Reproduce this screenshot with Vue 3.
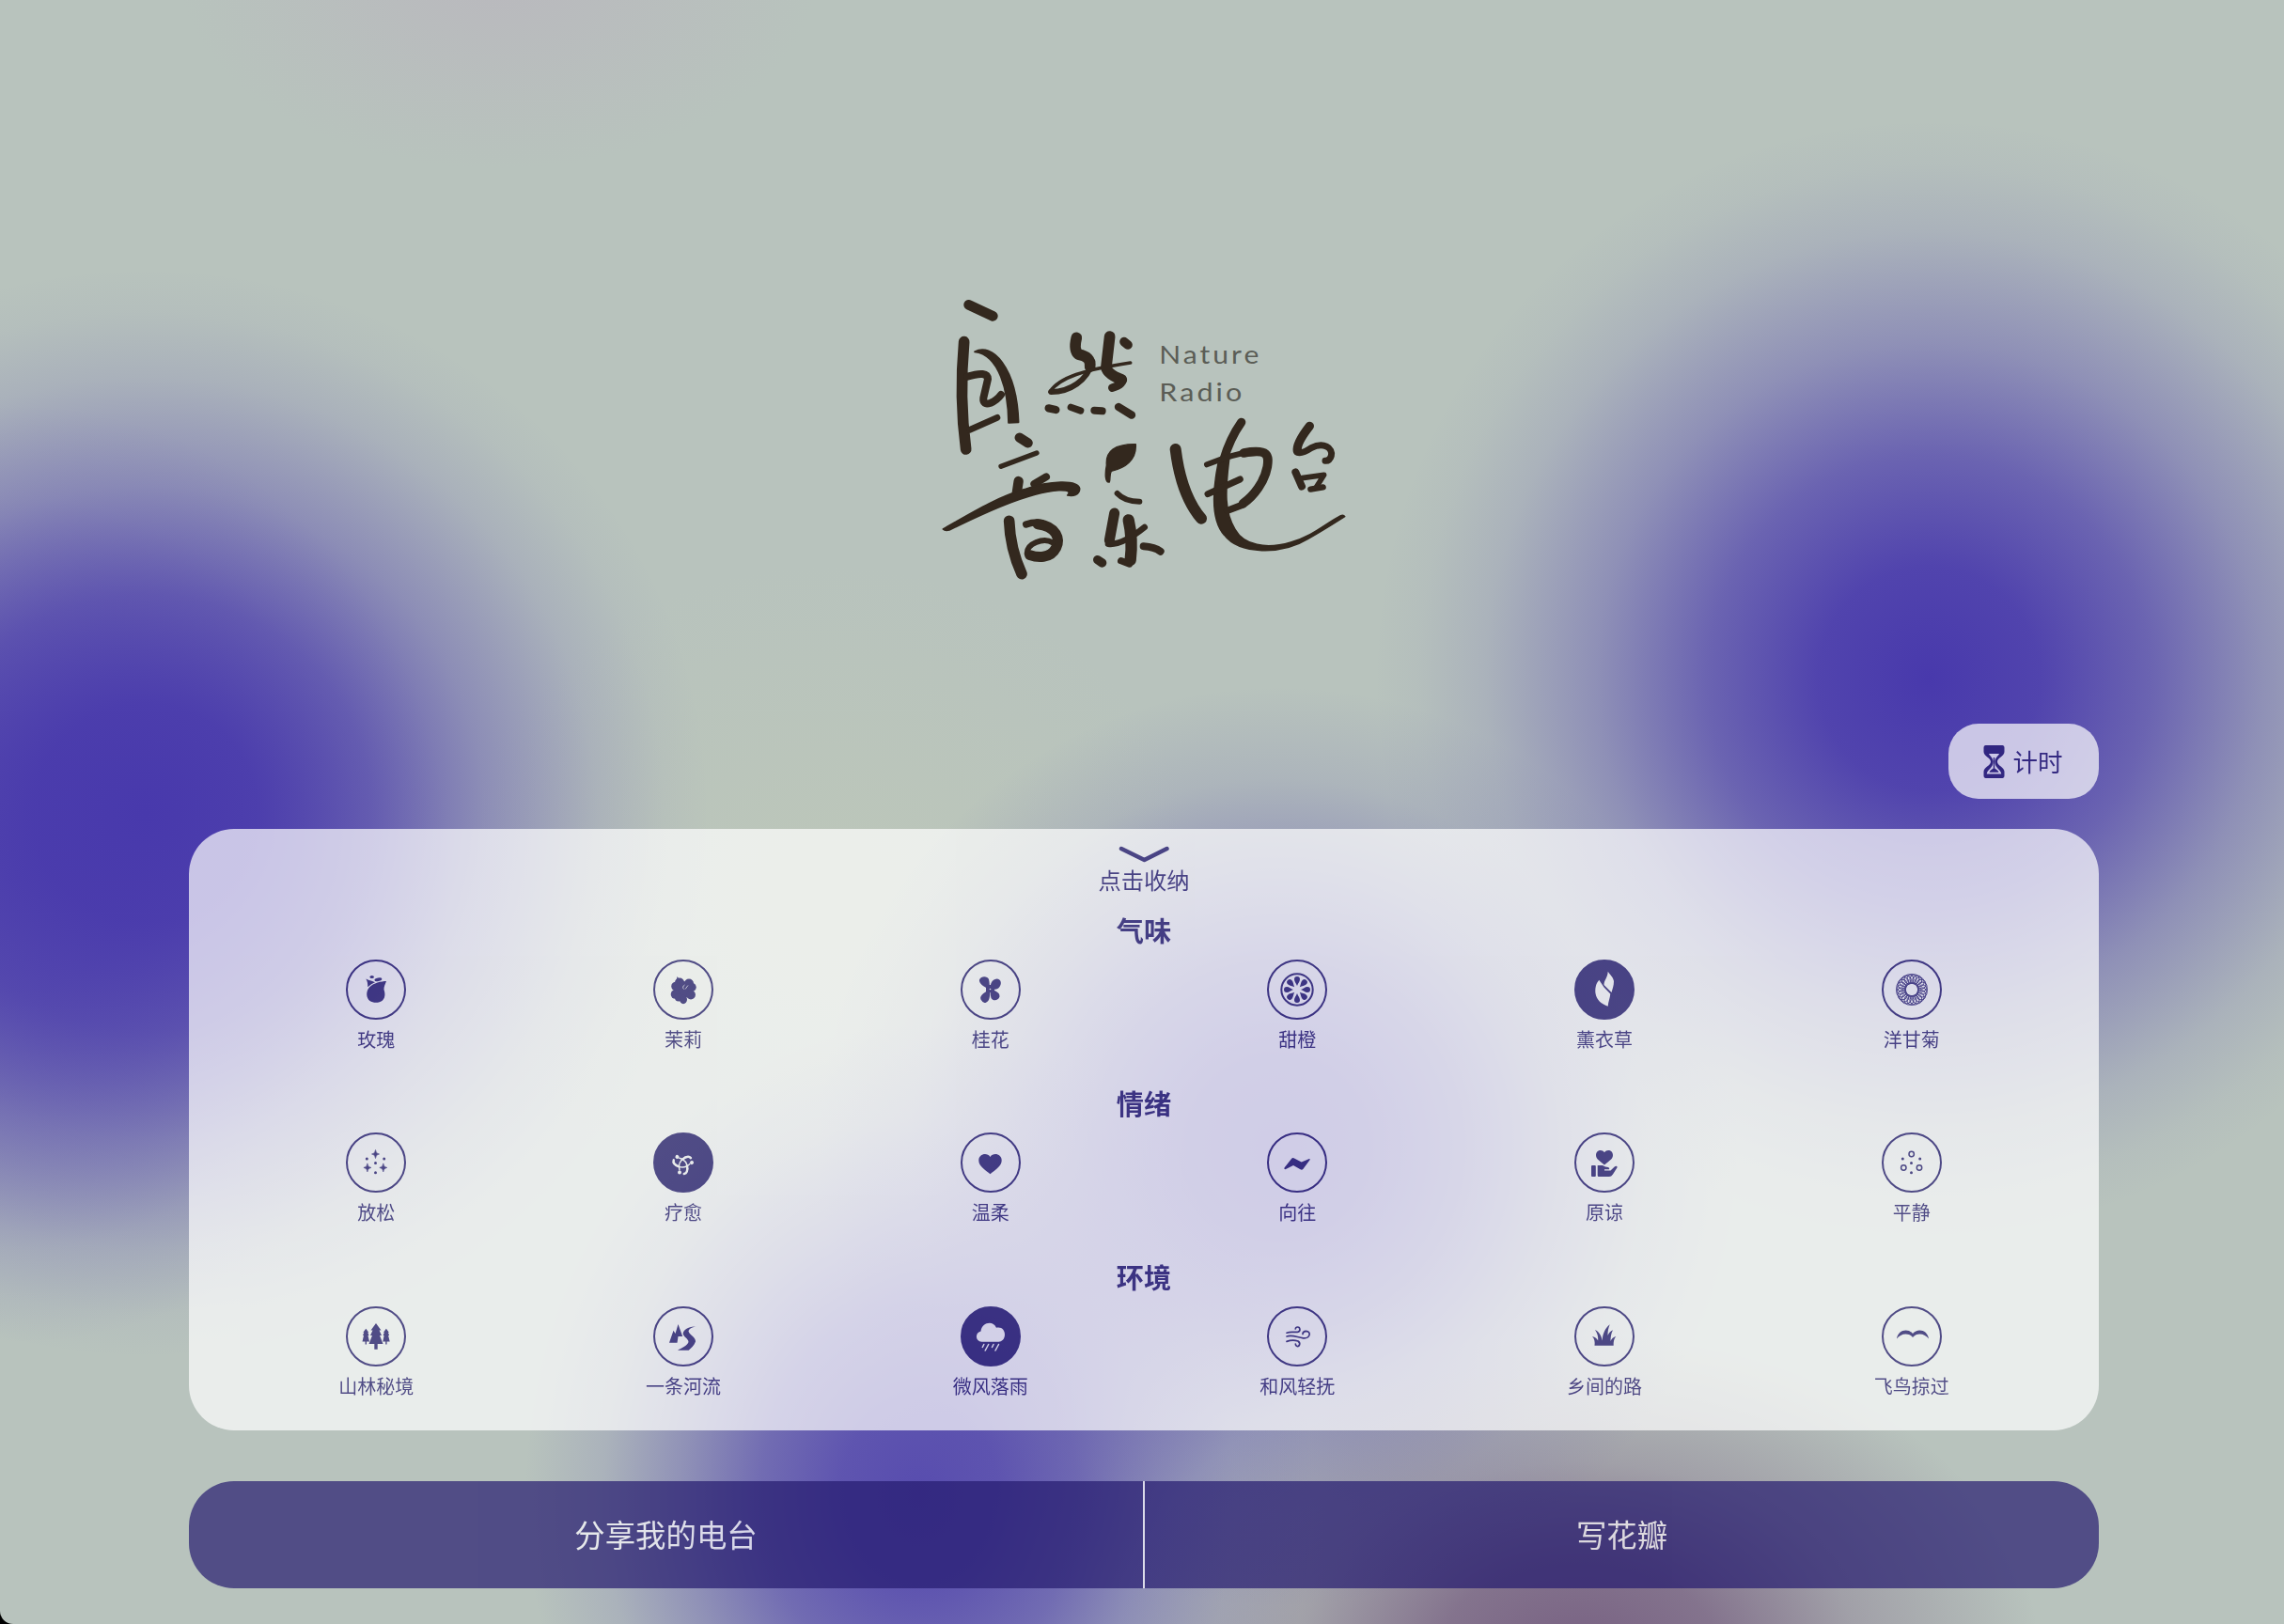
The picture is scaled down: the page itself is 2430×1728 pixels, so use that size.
<script setup>
const sections = [
  {
    title: '气味',
    items: [
      { label: '玫瑰', icon: 'rose' },
      { label: '茉莉', icon: 'jasmine' },
      { label: '桂花', icon: 'osmanthus' },
      { label: '甜橙', icon: 'orange' },
      { label: '薰衣草', icon: 'lavender', active: true },
      { label: '洋甘菊', icon: 'chamomile' },
    ],
  },
  {
    title: '情绪',
    items: [
      { label: '放松', icon: 'relax' },
      { label: '疗愈', icon: 'heal', active: true },
      { label: '温柔', icon: 'heart' },
      { label: '向往', icon: 'yearn' },
      { label: '原谅', icon: 'forgive' },
      { label: '平静', icon: 'calm' },
    ],
  },
  {
    title: '环境',
    items: [
      { label: '山林秘境', icon: 'forest' },
      { label: '一条河流', icon: 'river' },
      { label: '微风落雨', icon: 'rain', active: true },
      { label: '和风轻抚', icon: 'wind' },
      { label: '乡间的路', icon: 'grass' },
      { label: '飞鸟掠过', icon: 'bird' },
    ],
  },
]
const eighths = [0, 45, 90, 135, 180, 225, 270, 315]
const thirds = [0, 120, 240]
const petals = Array.from({ length: 24 }, (_, i) => i * 15)
</script>

<template>
  <main class="page">
    <header class="hero">
      <svg class="logo" viewBox="0 0 1440 1050" fill="none" stroke="#33281e" stroke-linecap="round" stroke-linejoin="round">
        <g class="brush">
          <path stroke-width="32" d="M152 103 229 139" />
          <path stroke-width="35" d="M137 221Q121 400 143 564" />
          <path fill="#33281e" stroke-width="5" d="M171 253C225 222 305 300 311 478L279 480C278 380 250 262 171 253Z" />
          <path stroke-width="24" d="M148 332Q212 312 213 340L199 400Q196 425 222 416Q242 408 255 390" />
          <path stroke-width="20" d="M155 502 243 463" />

          <path stroke-width="35" d="M496 208Q486 248 503 262Q543 268 539 300" />
          <path stroke-width="18" d="M547 285C530 345 475 381 415 381" />
          <path stroke-width="11" d="M411 381C440 335 520 310 668 288" />
          <path stroke-width="35" d="M602 204 591 300Q590 322 640 342" />
          <path stroke-width="26" d="M642 340Q645 358 610 368" />
          <path stroke-width="29" d="M648 221 660 231" />
          <path stroke-width="25" d="M407 433 430 438" />
          <path stroke-width="22" d="M478 430 509 441" />
          <path stroke-width="24" d="M553 440 578 442" />
          <path stroke-width="25" d="M630 429 672 455" />

          <path stroke-width="31" d="M314 527 341 544" />
          <path stroke-width="16" d="M255 619 369 576" />
          <path stroke-width="31" d="M311 666 305 706" />
          <path stroke-width="24" d="M361 675 399 652" />
          <path fill="#33281e" stroke-width="5" d="M70 819C160 768 240 718 330 692C410 664 500 660 506 690C506 710 485 715 467 711C477 700 472 694 440 695C340 702 200 768 90 822Q76 825 70 819Z" />
          <path stroke-width="35" d="M281 793Q284 880 321 962" />
          <path stroke-width="22" d="M335 804Q360 795 385 799" />
          <path stroke-width="33" d="M372 803C434 810 444 852 431 878C412 915 370 910 347 902" />
          <path stroke-width="18" d="M338 897C337 865 390 845 420 862" />

          <path fill="#33281e" stroke-width="4" d="M685 548C688 600 650 625 607 634C600 645 605 660 601 669C586 672 587 640 592 615C588 570 618 547 685 548Z" />
          <path stroke-width="18" d="M626 705Q650 731 697 731" />
          <path stroke-width="33" d="M617 768 601 855" />
          <path stroke-width="20" d="M597 866Q640 872 713 813" />
          <path stroke-width="37" d="M662 790Q676 850 668 918" />
          <path stroke-width="22" d="M665 930 638 920" />
          <path stroke-width="28" d="M563 917 578 927" />
          <path stroke-width="24" d="M710 874Q745 876 764 890" />

          <path stroke-width="36" d="M812 564Q830 710 894 785" />
          <path stroke-width="28" d="M1022 478Q985 530 965 600" />
          <path fill="#33281e" stroke-width="5" d="M948 610C930 700 925 790 968 838C1015 900 1150 902 1235 850C1280 825 1315 802 1352 779Q1348 773 1338 777C1290 802 1250 842 1180 861C1100 885 1030 870 1002 820C968 765 970 700 983 595Z" />
          <path stroke-width="18" d="M912 613C960 594 1010 577 1060 571" />
          <path stroke-width="29" d="M1030 576C1110 561 1110 585 1105 620C1096 668 1063 712 1028 737" />
          <path stroke-width="22" d="M1027 741 977 760" />
          <path stroke-width="21" d="M915 707 1018 660" />

          <path stroke-width="28" d="M1240 490Q1197 545 1201 569" />
          <path stroke-width="21" d="M1201 574Q1215 580 1245 560C1285 540 1315 560 1309 585Q1304 602 1290 601" />
          <path stroke-width="24" d="M1195 637 1215 683" />
          <path stroke-width="17" d="M1216 656 1286 646 1262 684" />
          <path stroke-width="19" d="M1243 692 1283 685" />
        </g>
        <g class="wordmark" stroke="none">
          <text x="760" y="291" textLength="327" lengthAdjust="spacingAndGlyphs">Nature</text>
          <text x="760" y="411" textLength="273" lengthAdjust="spacingAndGlyphs">Radio</text>
        </g>
      </svg>
    </header>

    <div class="tools">
      <button class="timer">
        <svg class="hourglass" viewBox="0 0 23 35">
          <path fill="currentColor" d="M2.500 0h18a2.300 2.300 0 0 1 2 2.500V7c0 4.500-7.500 6.500-7.500 10.500s7.500 6 7.500 10.500v4.500a2.300 2.300 0 0 1-2 2.500h-18a2.300 2.300 0 0 1-2-2.500V28c0-4.500 7.500-6.500 7.500-10.500S.5 11.500.5 7V2.500A2.300 2.300 0 0 1 2.500 0Z" />
          <path fill="#fff" d="M6 9h11c-1 2.500-4.200 4-4.700 8.300.3 7.200 6.200 8.200 7 13.200H3.700c.8-5 6.700-6 7-13.200C10.200 13 7 11.500 6 9Z" />
          <path fill="currentColor" d="M10.800 13h1.400v11.500c2 1.500 3.800 2.300 4.300 4.200h-10c.5-1.900 2.300-2.700 4.300-4.200Z" />
        </svg>
        <span>计时</span>
      </button>
    </div>

    <section class="panel">
      <button class="collapse">
        <svg class="chevron" viewBox="0 0 54 18" fill="none" stroke="currentColor" stroke-width="4.500" stroke-linecap="round" stroke-linejoin="round"><path d="M3 3 27.500 15 51.500 3" /></svg>
        <span>点击收纳</span>
      </button>

      <div v-for="section in sections" :key="section.title" class="section">
        <h2>{{ section.title }}</h2>
        <ul class="options">
          <li v-for="item in section.items" :key="item.label" class="option" :class="{ active: item.active }">
            <svg class="badge" viewBox="0 0 64 64" fill="currentColor">
              <circle class="disc" cx="32" cy="32" r="31" />
              <g v-if="item.icon === 'rose'">
                <path d="M43 23C38 23 29 25 25 29.500C21 34 21.500 41 25.500 44C29 46.500 35.500 46.500 39 43.500C42.500 40 41.500 35 40.500 32C40.200 29 42 26 43 23Z" />
                <path d="M21.300 20.500C24 22.500 27 22 31 24.300C28 25.500 26 27 23.300 29.300C23.300 26 23 23 21.300 20.500Z" />
                <ellipse cx="27.700" cy="18.500" rx="2.200" ry="1.600" />
                <ellipse cx="34.400" cy="21.300" rx="4" ry="1.800" transform="rotate(-10 34.400 21.300)" />
              </g>
              <g v-else-if="item.icon === 'jasmine'">
                <circle cx="32" cy="32" r="9" /><circle cx="28" cy="24.500" r="5" /><circle cx="38" cy="25.500" r="5" />
                <circle cx="24" cy="28.500" r="4.800" /><circle cx="41" cy="29.500" r="4.700" /><circle cx="23.500" cy="37" r="4.800" />
                <circle cx="40" cy="37.500" r="4.900" /><circle cx="27" cy="40.500" r="4" /><ellipse cx="32" cy="42.500" rx="4" ry="4.700" />
                <path d="m25.500 18 3 4-4 1Z" />
                <path class="cut" d="M32.500 31.500c-1.500-1.500-1-3.500 1-4.500M34 31.500l3-4" />
              </g>
              <g v-else-if="item.icon === 'osmanthus'">
                <path d="M31.500 31.500C25 30 19 25 20 21.500C22 17 28.500 17.500 30 21C31 25 30.500 28 31.500 31.500Z" />
                <path d="M31.500 31.500C31.500 26 33 21 38.500 20.500C43 21 44 25 41.500 29C39 32.500 35 32 31.500 31.500Z" />
                <path d="M31.500 31.500C36 33 42 34.500 41.500 39.500C40 44 34.500 44.500 32.500 41C31.500 38 32 35 31.500 31.500Z" />
                <path d="M31.500 31.500C31 37 32 44 26.500 46C23.500 46 22.500 43.500 21.500 42.500C19.500 38 27 34 31.500 31.500Z" />
                <path d="M27 27h9v8h-9Z" /><circle class="cut-dot" cx="31.500" cy="31.500" r=".8" />
              </g>
              <g v-else-if="item.icon === 'orange'">
                <circle class="line" cx="32" cy="32" r="16.700" stroke-width="2" />
                <path v-for="angle in eighths" :key="angle" d="M32 28C31.200 25.500 29 23.500 29 21A3 3 0 0 1 35 21C35 23.500 32.800 25.500 32 28Z" :transform="`rotate(${angle} 32 32)`" />
              </g>
              <g v-else-if="item.icon === 'lavender'">
                <path d="M26.300 21.700C22.500 26 22 31 22.500 36C23.500 43 29 47.500 35.700 49.700C36 45 38 41 38.300 36.500L31.500 29.500Z" />
                <path d="M35.700 12.700C38 16.500 41 18 42 23C42 28 40.500 31 39.500 35L31.500 27C31.500 22 35.500 19 35.700 12.700Z" />
              </g>
              <g v-else-if="item.icon === 'chamomile'">
                <circle v-for="angle in petals" :key="angle" class="line" cx="32" cy="20.500" r="5" stroke-width=".9" :transform="`rotate(${angle} 32 32)`" />
              </g>
              <g v-else-if="item.icon === 'relax' || item.icon === 'calm'">
                <circle cx="22.300" cy="28" r="1.500" /><circle cx="40.700" cy="28" r="1.500" />
                <circle cx="31.500" cy="32.500" r="1.500" /><circle cx="31.500" cy="42.800" r="1.500" />
                <template v-if="item.icon === 'relax'">
                  <path id="spark" d="M31.500 18.500Q31.800 22.700 35.500 23Q31.800 23.300 31.500 27.500Q31.200 23.300 27.500 23Q31.200 22.700 31.500 18.500Z" stroke="currentColor" stroke-width=".6" />
                  <use href="#spark" x="-8.600" y="14.400" /><use href="#spark" x="8.300" y="14.400" />
                </template>
                <g v-else class="line" stroke-width="1.500">
                  <circle cx="31.700" cy="23" r="2.700" /><circle cx="23.300" cy="37.500" r="2.700" /><circle cx="40" cy="37.500" r="2.700" />
                </g>
              </g>
              <g v-else-if="item.icon === 'heal'">
                <g v-for="angle in thirds" :key="angle" :transform="`rotate(${angle} 31.500 33.500)`">
                  <path class="line" stroke-width="1.500" d="M28 40.500C25.500 33 29.500 29 34 26" />
                  <path class="line" stroke-width="2.500" stroke-linecap="round" d="M36 35.500C36.800 40.500 35.500 43.500 32.800 44" />
                  <circle cx="28" cy="42.500" r="2" />
                </g>
              </g>
              <path v-else-if="item.icon === 'heart'" d="M31.500 44.200C26 39.500 19.300 36 19.300 29.700C19.300 23 28 20.800 31.500 26C35 20.800 43.700 23 43.700 29.700C43.700 36 37 39.500 31.500 44.200Z" />
              <path v-else-if="item.icon === 'yearn'" d="M18.500 37.500 26 28Q27.300 26.500 29 27.500L36.700 31.500 45 27.900Q46.300 27.900 45.500 29.200L38.500 38.800Q37.200 40.200 35.500 39.300L28 35 19.500 39.200Q17.700 39.200 18.500 37.500Z" />
              <g v-else-if="item.icon === 'forgive'">
                <path d="M32 34.500C28 31 23 28.500 23 24.300C23 18.500 29.500 17.500 32 21.200C34.500 17.500 41 18.500 41 24.300C41 28.500 36 31 32 34.500Z" />
                <rect x="18" y="35" width="4.800" height="12" rx="1" />
                <path d="M24.700 35H30Q33 37 36 37Q38 38 37 39.200H32V40.500H38.500L43 36.200Q45.200 35 45.700 37L41 44.500Q39.300 47 37 47H26Q24.700 47 24.700 45.500Z" />
              </g>
              <g v-else-if="item.icon === 'forest'">
                <path d="m32 18 5.500 7.500H35.500L38 31H36L39.500 40H33.700V45.700H30.300V40H24.500L28 31H26L28.500 25.500H26.500Z" />
                <path d="m21.300 23.700 3 4H23.300L24.500 31H23.500L25 37.500H22V40.500H20.600V37.500H17.500L19 31H18L19.300 27.700H18.300Z" />
                <path d="m42.900 23.700 3 4H44.900L46.100 31H45.100L46.700 37.500H43.600V40.500H42.200V37.500H39.300L40.600 31H39.600L40.900 27.700H39.900Z" />
              </g>
              <g v-else-if="item.icon === 'river'">
                <path d="M26.500 19 31.200 32H26.500L25.500 38.700H17L21.500 25.700 23.500 29Z" />
                <path d="M46 21.200C42 22 38 23.500 37.500 26.500C38.500 30.500 45.500 33 45 37.500C43.500 42 40 44.500 37.700 46.700H26C30 44.500 36 42 37.500 38C37.500 34 31.500 32.500 31.700 28.500C33 23 40 21.500 46 21.200Z" />
              </g>
              <g v-else-if="item.icon === 'rain'">
                <path d="M22.500 37.700C15.500 37.500 15 28 21.500 26.500C22.500 17 34.500 14.500 38 22.700C44 21.500 47 25.500 47 30C47 35 43.500 37.700 40.500 37.700Z" />
                <path class="line" stroke-width="1.500" stroke-linecap="round" d="m24.800 40.500-1.500 3M29.700 40.500l-3.500 6.500M35 40.500l-1.500 3M40.500 40.500 37 47" />
              </g>
              <path v-else-if="item.icon === 'wind'" class="line" stroke-width="1.700" stroke-linecap="round" d="M21 28.200C25 26.500 29 27.800 32.500 27.400C36 27 35.500 22 32.500 22Q30.500 22 30.300 24M21 32C27 30 32 33 38.500 33.800C46 34.500 47.500 26.500 41.500 26.300Q38 26.500 38 29.500M21 37.400C26 35.500 30 36 33 37C36.500 39.500 34 43 32 42.500Q30.300 42 30.300 40" />
              <path v-else-if="item.icon === 'grass'" d="M21.500 41.700C22 38 21.500 34.500 19 32C22.500 32.500 24 34.500 25.200 36.500C25.500 32 24.500 28.500 22 25C26 26.500 29 31.500 29.700 36.500C30 29 33 23 37.700 19.300C36 23.500 35.500 26.500 35.500 31C36.500 28.500 38.500 26.500 41 25.300C39 29 38.500 33 38.500 37C39.500 34.500 41.500 32.500 44.300 32C42 34.500 41.500 38 41.700 41.700Z" />
              <path v-else-if="item.icon === 'bird'" d="M16 34.500C17 25 28 22.500 33 29C38 22.500 49 25 50 34.500C46.500 29.500 38 27 33 33C28 27 19.500 29.500 16 34.500Z" />
            </svg>
            <span>{{ item.label }}</span>
          </li>
        </ul>
      </div>
    </section>

    <nav class="actions">
      <button>分享我的电台</button>
      <button>写花瓣</button>
    </nav>
  </main>
</template>

<style>
body {
  background: #000;
}
</style>

<style scoped>
.page {
  --ink: #251b6f;
  --violet: 72, 57, 172;
  box-sizing: border-box;
  width: 2430px;
  height: 1728px;
  padding: 290px 197px 0 201px;
  overflow: hidden;
  display: flex;
  flex-direction: column;
  border-bottom-left-radius: 14px;
  font-family: "Noto Sans CJK SC", sans-serif;
  background:
    radial-gradient(ellipse 600px 580px at 155px 865px, rgb(var(--violet)) 0%, rgba(var(--violet), .94) 20%, rgba(var(--violet), .73) 40%, rgba(var(--violet), .39) 60%, rgba(var(--violet), .13) 80%, rgba(var(--violet), .03) 92%, rgba(var(--violet), 0) 100%),
    radial-gradient(ellipse 460px 500px at 20px 930px, rgba(var(--violet), .7) 0%, rgba(var(--violet), .6) 25%, rgba(var(--violet), .3) 55%, rgba(var(--violet), .08) 80%, rgba(var(--violet), 0) 100%),
    radial-gradient(ellipse 590px 595px at 2052px 722px, rgb(var(--violet)) 0%, rgba(var(--violet), .92) 20%, rgba(var(--violet), .69) 40%, rgba(var(--violet), .37) 60%, rgba(var(--violet), .12) 80%, rgba(var(--violet), .03) 92%, rgba(var(--violet), 0) 100%),
    radial-gradient(ellipse 420px 500px at 978px 1590px, rgba(var(--violet), .86) 0%, rgba(var(--violet), .8) 20%, rgba(var(--violet), .63) 40%, rgba(var(--violet), .36) 60%, rgba(var(--violet), .12) 80%, rgba(var(--violet), 0) 100%),
    radial-gradient(ellipse 490px 490px at 1360px 1220px, rgba(var(--violet), .78) 0%, rgba(var(--violet), .72) 20%, rgba(var(--violet), .55) 40%, rgba(var(--violet), .31) 60%, rgba(var(--violet), .1) 80%, rgba(var(--violet), 0) 100%),
    radial-gradient(ellipse 490px 340px at 1680px 1760px, rgba(92, 55, 105, .7) 0%, rgba(92, 55, 105, .57) 30%, rgba(92, 55, 105, .25) 60%, rgba(92, 55, 105, 0) 100%),
    radial-gradient(ellipse 340px 210px at 530px -30px, rgba(186, 180, 190, .7) 0%, rgba(186, 180, 190, .4) 45%, rgba(186, 180, 190, 0) 100%),
    radial-gradient(ellipse 400px 350px at 880px 950px, rgba(190, 200, 184, .7) 0%, rgba(190, 200, 184, 0) 100%),
    #b8c3bd;
}

button {
  padding: 0;
  border: 0;
  background: none;
  color: inherit;
  font: inherit;
}

.hero {
  height: 480px;
  padding-left: 779px;
}

.logo {
  display: block;
  width: 480px;
  height: 350px;
}

.brush {
  filter: blur(2px);
}

.wordmark {
  fill: #5b5d56;
  font-family: Lato, sans-serif;
  font-size: 80px;
  letter-spacing: 8px;
}

.tools {
  display: flex;
  justify-content: flex-end;
  margin-bottom: 32px;
}

.timer {
  box-sizing: border-box;
  display: flex;
  align-items: center;
  justify-content: center;
  gap: 9px;
  width: 160px;
  height: 80px;
  padding-right: 2px;
  border-radius: 32px;
  background: #fff;
  color: var(--ink);
  font-size: 26.500px;
  line-height: 1;
  opacity: .7;
}

.hourglass {
  width: 23px;
  height: 35px;
}

.panel {
  box-sizing: border-box;
  height: 640px;
  padding: 18px 36px 0;
  border-radius: 48px;
  background: #fff;
  color: var(--ink);
  opacity: .7;
}

.collapse {
  display: flex;
  flex-direction: column;
  align-items: center;
  width: 100%;
  height: 70px;
  font-size: 24.300px;
  line-height: 36px;
}

.chevron {
  width: 54px;
  height: 18px;
}

.section {
  height: 184px;
}

.section + .section + .section {
  margin-top: 1px;
}

h2 {
  margin: 0;
  height: 51px;
  text-align: center;
  font-size: 29.160px;
  font-weight: 700;
  line-height: 38px;
}

.options {
  display: grid;
  grid-template-columns: repeat(6, 1fr);
  margin: 0;
  padding: 0;
  list-style: none;
}

.option {
  display: flex;
  flex-direction: column;
  align-items: center;
  font-size: 20px;
  line-height: 42px;
}

.badge {
  width: 64px;
  height: 64px;
}

.disc {
  fill: none;
  stroke: var(--ink);
  stroke-width: 2;
}

.active .badge {
  color: #fff;
}

.active .disc {
  fill: var(--ink);
}

.line {
  fill: none;
  stroke: currentColor;
}

.cut {
  fill: none;
  stroke: #fff;
  stroke-width: .7;
}

.cut-dot {
  fill: #fff;
}

.actions {
  display: flex;
  height: 114px;
  margin-top: 54px;
  border-radius: 48px;
  overflow: hidden;
  background: var(--ink);
  color: #fff;
  font-size: 32.400px;
  opacity: .7;
}

.actions button {
  flex: 1;
  padding-bottom: 3px;
}

.actions button + button {
  border-left: 2px solid #fff;
}
</style>
